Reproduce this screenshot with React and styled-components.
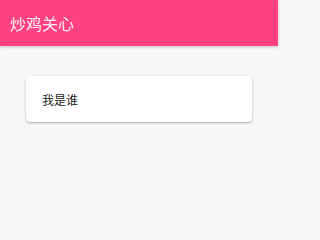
import React from "react";
import styled, { createGlobalStyle } from "styled-components";

const GlobalStyle = createGlobalStyle`
  html, body {
    margin: 0;
    padding: 0;
    background: #f7f7f7;
    font-family: Roboto, "Noto Sans CJK SC", sans-serif;
  }
`;

// the reference is a 278px wide phone-ish screen
const Screen = styled.div`
  width: 278px;
  min-height: 213px;
  background: #f7f7f7;
`;

const AppBar = styled.header`
  height: 46px;
  display: flex;
  align-items: center;
  padding: 0 10px;
  background: #ff4081;
  box-shadow: 0 1px 3px rgba(0, 0, 0, 0.2);
`;

const Title = styled.h1`
  margin: 0;
  font-size: 16px;
  font-weight: 400;
  color: rgba(255, 255, 255, 0.92);
`;

const Content = styled.main`
  padding: 30px 25px;
`;

const Card = styled.div`
  height: 46px;
  display: flex;
  align-items: center;
  padding: 0 16px;
  margin: 0 1px;
  background: #fff;
  border-radius: 4px;
  box-shadow: 0 1px 3px rgba(0, 0, 0, 0.2), 0 1px 1px rgba(0, 0, 0, 0.12);
  font-size: 12px;
  color: #222;
`;

const App = () => {
  return (
    <Screen>
      <GlobalStyle />
      <AppBar>
        <Title>炒鸡关心</Title>
      </AppBar>
      <Content>
        <Card>我是谁</Card>
      </Content>
    </Screen>
  );
};

export default App;
